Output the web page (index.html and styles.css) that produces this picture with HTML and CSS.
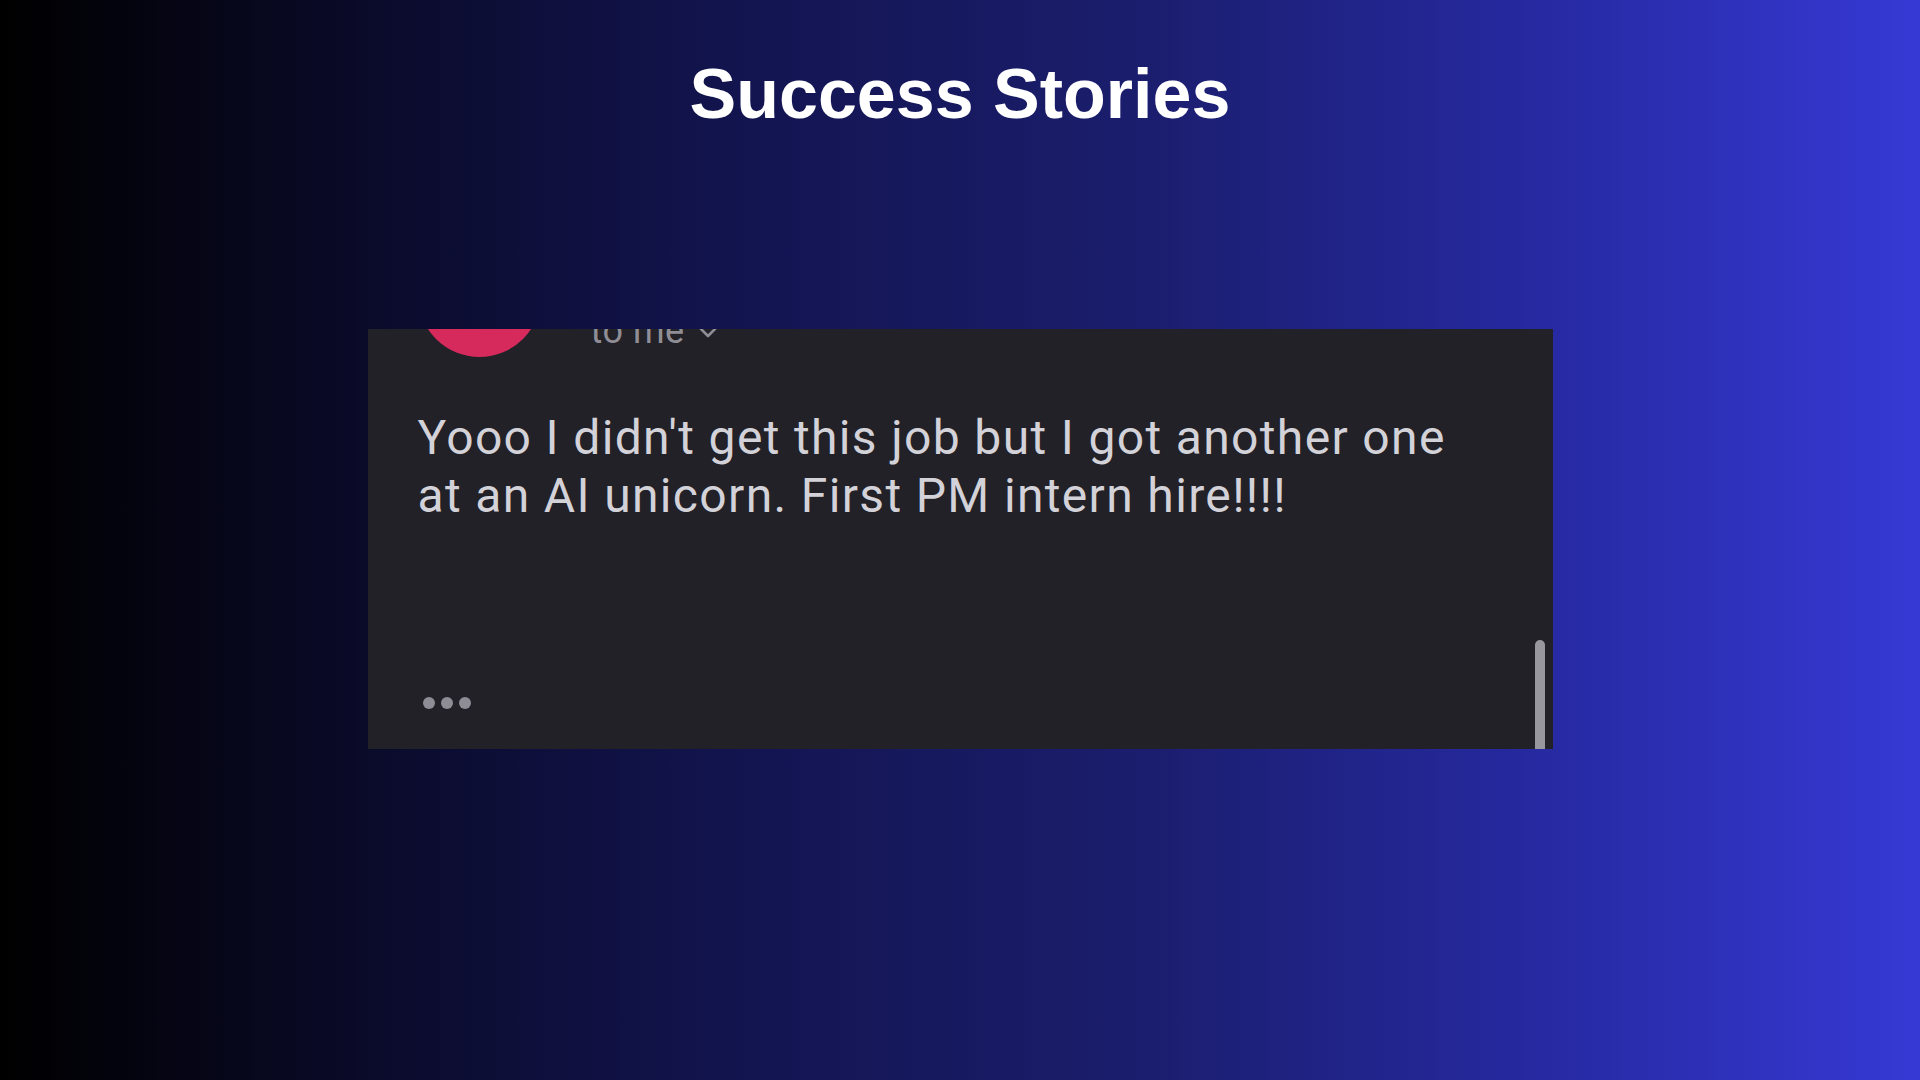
FILE: index.html
```html
<!DOCTYPE html>
<html lang="en">
<head>
<meta charset="UTF-8">
<title>Success Stories</title>
<link rel="stylesheet" href="styles.css">
</head>
<body>
<main class="slide">
  <h1 class="title">Success Stories</h1>
  <section class="mail">
    <div class="mail-head">
      <div class="avatar"></div>
      <div class="meta">
        <span class="to">to me</span>
        <svg class="chev" width="22" height="14" viewBox="0 0 22 14"><path d="M3 3 L11 11 L19 3" fill="none" stroke="#8f8e96" stroke-width="2.6" stroke-linecap="round" stroke-linejoin="round"/></svg>
      </div>
    </div>
    <p class="mail-body">Yooo I didn't get this job but I got another one at an AI unicorn. First PM intern hire!!!!</p>
    <div class="dots"><span></span><span></span><span></span></div>
    <div class="scroll"></div>
  </section>
</main>
</body>
</html>
```
FILE: styles.css
```css
html, body {
  margin: 0;
  height: 100%;
}
body {
  background: linear-gradient(to right, #000000 0%, #0b0b2c 20%, #131552 40%, #1b1e6e 60%, #2629a0 80%, #3639d4 100%);
  font-family: Roboto, "Noto Sans", sans-serif;
  overflow: hidden;
}
.slide {
  display: flex;
  flex-direction: column;
  align-items: center;
}
.title {
  margin: 0;
  padding-top: 59px;
  font-family: "Liberation Sans", Arial, sans-serif;
  font-weight: 700;
  font-size: 70px;
  line-height: 70px;
  color: #ffffff;
}
/* mail card */
.mail {
  position: relative;
  margin-top: 200px;
  width: 1185px;
  height: 420px;
  background: #222127;
  overflow: hidden;
  display: flex;
  flex-direction: column;
  box-sizing: border-box;
  padding-left: 50px;
}
.mail-head {
  display: flex;
  margin-top: -95px;
  height: 123px;
}
.avatar {
  width: 123px;
  height: 123px;
  border-radius: 50%;
  background: #d62a5c;
}
.meta {
  display: flex;
  align-items: center;
  gap: 12px;
  margin-left: 50px;
  padding-top: 79px;
  height: 36px;
}
.to {
  font-size: 36px;
  line-height: 36px;
  letter-spacing: 0.5px;
  color: #8f8e96;
}
.chev {
  margin-top: 2px;
}
.mail-body {
  margin: 52px 0 0;
  font-size: 48px;
  line-height: 58px;
  letter-spacing: 1.35px;
  color: #d3d2d9;
  max-width: 1060px;
}
.dots {
  margin-top: auto;
  margin-bottom: 40px;
  margin-left: 5px;
  display: flex;
  gap: 6px;
}
.dots span {
  width: 12px;
  height: 12px;
  border-radius: 50%;
  background: #8e8d95;
}
.scroll {
  position: absolute;
  right: 8px;
  bottom: 0;
  width: 10px;
  height: 109px;
  border-radius: 5px 5px 0 0;
  background: #98979e;
}
```
